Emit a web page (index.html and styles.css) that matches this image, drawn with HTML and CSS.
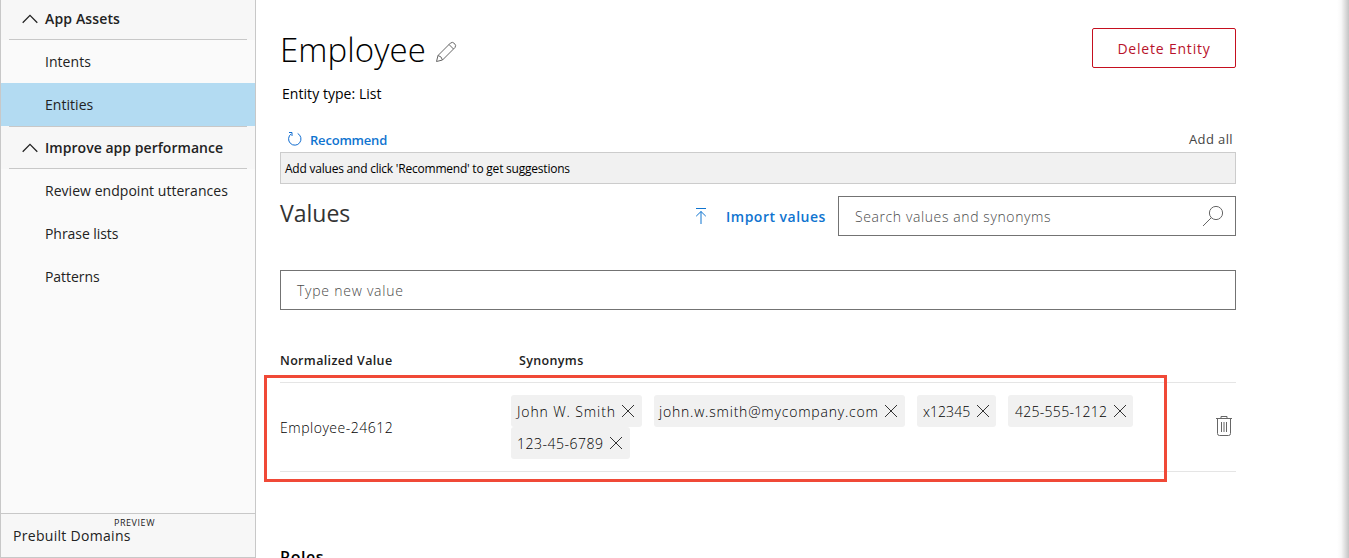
FILE: index.html
```html
<!DOCTYPE html>
<html lang="en">
<head>
<meta charset="utf-8">
<title>Employee - Entities</title>
<link rel="stylesheet" href="styles.css">
</head>
<body>
<div class="app">
  <nav class="sidebar">
    <div class="group first">
      <svg class="chevron" width="16" height="10" viewBox="0 0 16 10"><path d="M.7 8.700 8 1.400l7.300 7.300"/></svg>
      <span class="assets">App Assets</span>
    </div>
    <a class="item">Intents</a>
    <a class="item active">Entities</a>
    <div class="group">
      <svg class="chevron" width="16" height="10" viewBox="0 0 16 10"><path d="M.7 8.700 8 1.400l7.300 7.300"/></svg>
      <span>Improve app performance</span>
    </div>
    <a class="item">Review endpoint utterances</a>
    <a class="item phrase">Phrase lists</a>
    <a class="item patterns">Patterns</a>
    <div class="domains"><span class="domains-label">Prebuilt Domains</span><span class="preview">PREVIEW</span></div>
  </nav>
  <main class="main">
    <header class="head">
      <h1 class="title">Employee</h1>
      <svg class="pencil" width="22" height="22" viewBox="0 0 22 22"><path d="M1.500 20.500 3 14.500 15.500 2q2-1.500 4 .5t.5 4L7.500 19ZM3 14.500q3.500.5 4.500 4.500M14 3.500l4.500 4.500"/></svg>
      <button class="delete">Delete Entity</button>
    </header>
    <p class="type">Entity type: List</p>
    <div class="recommend-row">
      <svg class="refresh" width="16" height="16" viewBox="0 0 16 16"><path d="M4.200 2.900A6.200 6.200 0 1 0 10.700 2.500M2 1.500h3V5"/></svg>
      <a class="recommend">Recommend</a>
      <a class="add-all">Add all</a>
    </div>
    <div class="hint"><span>Add values and click 'Recommend' to get suggestions</span></div>
    <div class="values-row">
      <h2 class="values">Values</h2>
      <svg class="upload" width="12" height="16" viewBox="0 0 12 16"><path d="M1 .5h10M6 16V3.500M1.200 8.200 6 3.500l4.800 4.700"/></svg>
      <a class="import">Import values</a>
      <div class="search"><span class="search-text">Search values and synonyms</span>
        <svg class="lens" width="22" height="22" viewBox="0 0 22 22"><circle cx="14" cy="8" r="6.600"/><path d="M9.300 12.700 1 21"/></svg>
      </div>
    </div>
    <div class="new-value"><span class="new-text">Type new value</span></div>
    <div class="table-head"><span class="col-norm">Normalized Value</span><span class="col-syn">Synonyms</span></div>
    <div class="table-row">
      <div class="norm">Employee-24612</div>
      <div class="chips">
        <div class="chip c1"><span>John W. Smith</span><svg class="x" width="14" height="14" viewBox="0 0 14 14"><path d="m1 1 12 12M13 1 1 13"/></svg></div>
        <div class="chip c2"><span>john.w.smith@mycompany.com</span><svg class="x" width="14" height="14" viewBox="0 0 14 14"><path d="m1 1 12 12M13 1 1 13"/></svg></div>
        <div class="chip c3"><span>x12345</span><svg class="x" width="14" height="14" viewBox="0 0 14 14"><path d="m1 1 12 12M13 1 1 13"/></svg></div>
        <div class="chip c4"><span>425-555-1212</span><svg class="x" width="14" height="14" viewBox="0 0 14 14"><path d="m1 1 12 12M13 1 1 13"/></svg></div>
        <div class="chip c5"><span>123-45-6789</span><svg class="x" width="14" height="14" viewBox="0 0 14 14"><path d="m1 1 12 12M13 1 1 13"/></svg></div>
      </div>
      <svg class="trash" width="18" height="22" viewBox="0 0 18 22"><path d="M1 3.500h16M6 3V1.500h6V3M2.500 4v14.500q0 2 2 2h9q2 0 2-2V4M6.500 7v10M9 7v10M11.500 7v10"/></svg>
      <div class="highlight"></div>
    </div>
    <h3 class="roles">Roles</h3>
  </main>
  <div class="edge"></div>
</div>
</body>
</html>
```
FILE: styles.css
```css
* { box-sizing: border-box; }
html, body { margin: 0; height: 558px; overflow: hidden; background: #fff; }
body { font-family: "Open Sans", "Noto Sans", sans-serif; font-size: 14px; color: #222; }
svg { display: block; flex: none; fill: none; stroke: #666; stroke-width: 1; }
span, a, h1, h2, h3, button { white-space: nowrap; }
h1, h2, h3, p { margin: 0; }
.app { display: flex; width: 1349px; height: 558px; overflow: hidden; }

.sidebar { display: flex; flex-direction: column; width: 256px; height: 558px; background: #fafafa; border-left: 1px solid #c8c8c8; border-right: 1px solid #c8c8c8; flex: none; }
.group { display: flex; align-items: center; height: 43px; padding-left: 21px; gap: 7px; font-weight: 600; letter-spacing: .04px; flex: none;
  background: linear-gradient(#c8c8c8, #c8c8c8) 8px 0 / 238px 1px no-repeat, linear-gradient(#c8c8c8, #c8c8c8) 8px 42px / 238px 1px no-repeat, #f7f7f7; }
.group.first { height: 40px; padding-bottom: 3px; background: linear-gradient(#c8c8c8, #c8c8c8) 8px 39px / 238px 1px no-repeat, #f7f7f7; }
.assets { letter-spacing: .14px; }
.chevron { stroke: #222; stroke-width: 1.3; }
.item { display: flex; align-items: center; height: 43px; padding-left: 44px; letter-spacing: .04px; flex: none; }
.phrase { letter-spacing: -.06px; }
.patterns { letter-spacing: -.06px; }
.active { background: #b3dbf2; }
.domains { display: flex; align-items: flex-start; height: 45px; margin-top: auto; padding-left: 12px; background: #f7f7f7; border-top: 1px solid #c8c8c8; border-bottom: 1px solid #c8c8c8; font-weight: 500; }
.domains-label { width: 101px; line-height: 20px; padding-top: 12px; letter-spacing: .3px; }
.preview { font-size: 9px; line-height: 12px; padding-top: 3px; font-weight: 400; letter-spacing: .55px; }

.main { width: 956px; margin-left: 24px; flex: none; }
.head { display: flex; height: 68px; padding-top: 28px; align-items: center; color: #000; }
.title { font-size: 33px; line-height: 40px; font-weight: 300; padding-top: 3px; letter-spacing: .08px; }
.pencil { margin-left: 9px; margin-top: 8px; }
.delete { margin-left: auto; width: 144px; height: 40px; padding: 0; border: 1px solid #c50f1f; border-radius: 2px; background: #fff; color: #b8122b; font: 500 14px "Open Sans", sans-serif; letter-spacing: .8px; }
.type { height: 52px; margin-top: 10px; padding: 6px 0 0 2px; line-height: 20px; color: #000; letter-spacing: .05px; }
.recommend-row { display: flex; align-items: center; height: 22px; padding: 0 0 2px 6px; font-size: 13px; font-weight: 600; }
.refresh { stroke: #0f6cd0; margin: 0 0 3px 1px; }
.recommend { color: #0f74d0; margin-left: 7px; letter-spacing: -.2px; }
.add-all { margin-left: auto; margin-right: 3px; margin-top: -2px; font-weight: 500; color: #444; letter-spacing: .4px; }
.hint { display: flex; align-items: center; height: 32px; padding-left: 4px; border: 1px solid #ccc; background: #f1f1f1; font-size: 12px; color: #000; letter-spacing: -0.22px; }
.values-row { display: flex; align-items: center; height: 40px; margin-top: 12px; }
.values { width: 415px; font-size: 23px; font-weight: 400; line-height: 30px; margin-top: -6px; color: #333; }
.upload { stroke: #0f74d0; }
.import { width: 112px; margin-left: 19px; color: #0f74d0; font-weight: 600; letter-spacing: .5px; }
.search { display: flex; align-items: center; justify-content: space-between; width: 398px; height: 40px; margin-left: auto; padding: 0 11px 0 16px; border: 1px solid #737373; color: #4a4a4a; }
.search-text, .new-text { font-weight: 300; letter-spacing: .6px; }
.new-text { letter-spacing: .75px; }
.new-value { display: flex; align-items: center; height: 40px; margin-top: 34px; padding-left: 16px; border: 1px solid #737373; color: #4a4a4a; }
.table-head { display: flex; height: 72px; padding-top: 41px; line-height: 20px; font-size: 12.500px; font-weight: 600; letter-spacing: .35px; }
.col-norm { width: 239px; }
.table-row { position: relative; display: flex; align-items: center; height: 90px; border-top: 1px solid #e5e5e5; border-bottom: 1px solid #e5e5e5; }
.norm { width: 231px; font-weight: 300; letter-spacing: .52px; color: #000; }
.chips { display: flex; flex-wrap: wrap; column-gap: 12px; width: 650px; font-weight: 300; color: #000; }
.chip { display: flex; align-items: center; justify-content: space-between; height: 32px; padding: 0 7px 0 6px; border-radius: 3px; background: #f1f1f1; letter-spacing: .5px; }
.c1 { width: 131px; letter-spacing: .88px; }
.c2 { width: 251px; letter-spacing: .79px; padding-left: 5px; }
.c3 { width: 79px; letter-spacing: .05px; padding-right: 6px; }
.c4 { width: 125px; padding-left: 7px; letter-spacing: .28px; padding-right: 6px; }
.c5 { width: 119px; }
.x { stroke: #333; }
.trash { margin-left: auto; margin-right: 3px; margin-top: -2px; }
.highlight { position: absolute; left: -16px; top: -8px; width: 903px; height: 107px; border: 3px solid #f04937; }
.roles { margin-top: 73px; font-size: 16px; font-weight: 600; line-height: 24px; color: #000; letter-spacing: .5px; }
.edge { width: 12px; margin-left: auto; background: linear-gradient(to right, #fff 0, #f8f8f8 35%, #c4c4c4 100%); }
```
